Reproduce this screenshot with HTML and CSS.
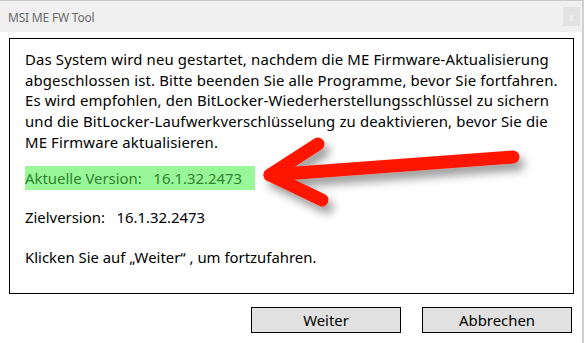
FILE: index.html
```html
<!DOCTYPE html>
<html lang="de">
<head>
<meta charset="utf-8">
<title>MSI ME FW Tool</title>
<link rel="stylesheet" href="styles.css">
</head>
<body>
<div class="window">
  <div class="titlebar">
    <span class="title">MSI ME FW Tool</span>
    <span class="close">x</span>
  </div>
  <div class="panel">
    <p class="intro">Das System wird neu gestartet, nachdem die ME Firmware-Aktualisierung<br>abgeschlossen ist. Bitte beenden Sie alle Programme, bevor Sie fortfahren.<br>Es wird empfohlen, den BitLocker-Wiederherstellungsschlüssel zu sichern<br>und die BitLocker-Laufwerkverschlüsselung zu deaktivieren, bevor Sie die<br>ME Firmware aktualisieren.</p>
    <p class="current"><span class="hl">Aktuelle Version:&nbsp;&nbsp;&nbsp;16.1.32.2473</span></p>
    <p class="target">Zielversion:&nbsp;&nbsp;&nbsp;16.1.32.2473</p>
    <p class="hint">Klicken Sie auf „Weiter“ , um fortzufahren.</p>
  </div>
  <div class="actions">
    <button class="btn">Weiter</button>
    <button class="btn">Abbrechen</button>
  </div>
  <svg class="arrow" width="584" height="343" viewBox="0 0 584 343">
    <defs>
      <filter id="sh" x="-20%" y="-50%" width="140%" height="200%">
        <feGaussianBlur in="SourceAlpha" stdDeviation="5"/>
        <feOffset dx="5" dy="7" result="b"/>
        <feComponentTransfer><feFuncA type="linear" slope="0.4"/></feComponentTransfer>
        <feMerge><feMergeNode/><feMergeNode in="SourceGraphic"/></feMerge>
      </filter>
    </defs>
    <g filter="url(#sh)" stroke="#ff1500" stroke-width="13" stroke-linecap="round" stroke-linejoin="round" fill="none">
      <path d="M513 157 L270 175"/>
      <path d="M318 144 L270 175 L322 200"/>
    </g>
  </svg>
</div>
</body>
</html>
```
FILE: styles.css
```css
* { box-sizing: border-box; }
html, body { margin: 0; padding: 0; background: #ffffff; }
body { width: 584px; height: 343px; overflow: hidden; }
.window {
  position: relative;
  width: 584px;
  height: 343px;
  border-top: 1px solid #c9c9c9;
  border-right: 2px solid #d0d0d0;
  font-family: "Noto Sans", "Open Sans", sans-serif;
}
.titlebar {
  height: 31px;
  background: #f0f0f0;
  display: flex;
  align-items: center;
  justify-content: space-between;
  padding: 0 0 0 8px;
}
.title {
  font-size: 12px;
  color: #6a6a6a;
  letter-spacing: -0.2px;
  margin-top: 1px;
}
.close {
  width: 17px;
  height: 19px;
  margin-right: 2px;
  background: #e2e2e2;
  color: #f6f6f6;
  font-size: 10px;
  display: flex;
  align-items: center;
  justify-content: center;
}
.panel {
  margin: 6px 0 0 9px;
  width: 565px;
  height: 256px;
  border: 1px solid #000000;
  padding: 10px 6px 0 15px;
  font-size: 14.9px;
  line-height: 20.7px;
  color: #000000;
  white-space: nowrap;
}
.panel p { margin: 0; }
.intro { letter-spacing: 0.15px; }
.current { margin-top: 13px !important; }
.hl {
  display: inline-block;
  background: #98f898;
  color: #2f822f;
  padding: 2px 1px 2px 0;
  width: 230px;
}
.target { margin-top: 17px !important; }
.hint { margin-top: 19px !important; }
.actions {
  display: flex;
  justify-content: flex-end;
  gap: 21px;
  padding: 13px 10px 0 0;
}
.btn {
  width: 150px;
  height: 26px;
  background: #e1e1e1;
  border: 1px solid #000000;
  font-family: "Noto Sans", "Open Sans", sans-serif;
  font-size: 14.9px;
  color: #000000;
  padding: 0;
  line-height: 22px;
}
.arrow {
  position: absolute;
  left: 0;
  top: -1px;
  pointer-events: none;
}
```
